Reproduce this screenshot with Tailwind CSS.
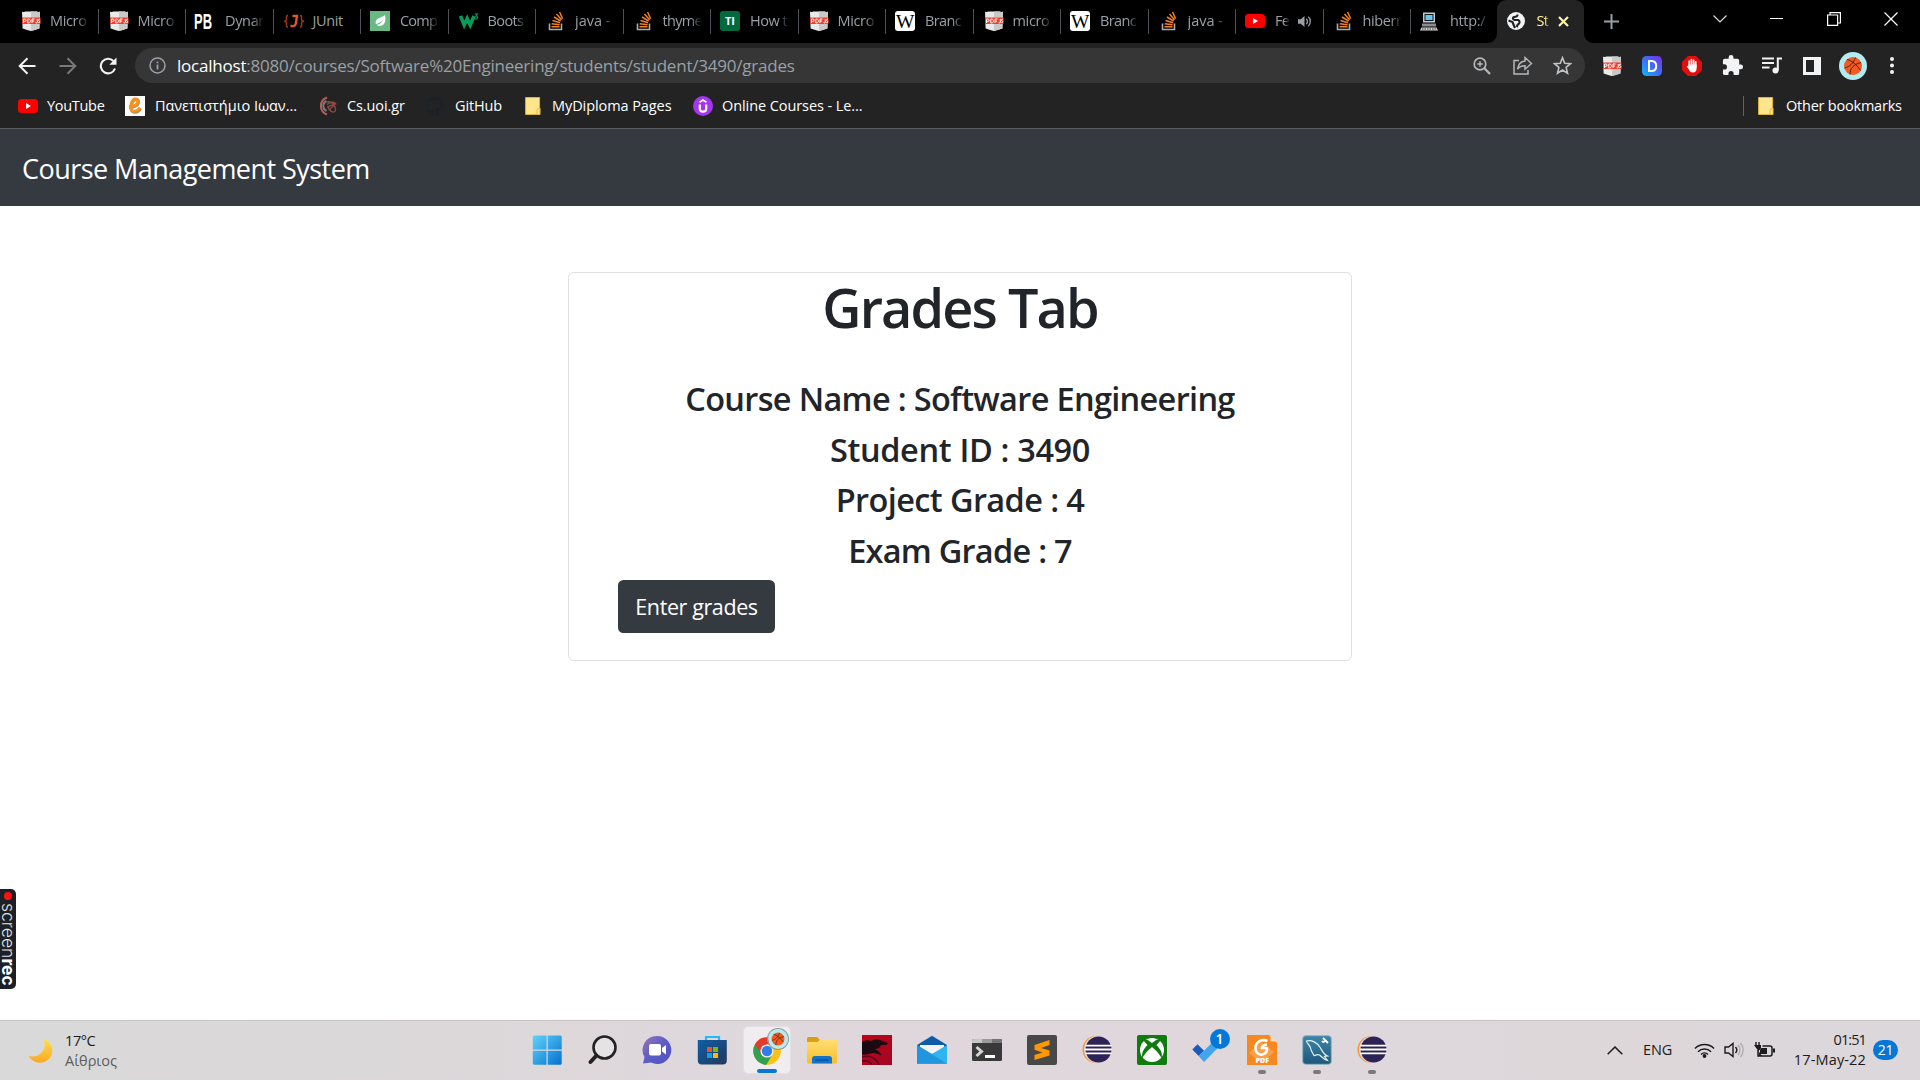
<!DOCTYPE html>
<html lang="en">
<head>
<meta charset="utf-8">
<title>Student Grades</title>
<script src="https://cdn.jsdelivr.net/npm/@tailwindcss/browser@4"></script>
</head>
<body class="relative flex h-screen w-screen flex-col overflow-hidden bg-white font-['Open_Sans','Noto_Sans',sans-serif] text-[#212529]">

<svg class="absolute size-0" aria-hidden="true">
  <defs>
    <linearGradient id="gWin" x1="0" y1="0" x2="1" y2="1"><stop offset="0" stop-color="#5fd3fb"/><stop offset="1" stop-color="#0571d0"/></linearGradient>
    <linearGradient id="gChat" x1="0" y1="0" x2="1" y2="1"><stop offset="0" stop-color="#9a74b4"/><stop offset=".5" stop-color="#5b5cc8"/><stop offset="1" stop-color="#5252bd"/></linearGradient>
    <linearGradient id="gStore" x1="0" y1="0" x2="1" y2="1"><stop offset="0" stop-color="#0d5ea8"/><stop offset="1" stop-color="#253858"/></linearGradient>
    <linearGradient id="gFold" x1="0" y1="0" x2="0" y2="1"><stop offset="0" stop-color="#ffdf75"/><stop offset="1" stop-color="#fbbd26"/></linearGradient>
    <linearGradient id="gMoon" x1="0" y1="0" x2="0" y2="1"><stop offset="0" stop-color="#ffe04a"/><stop offset="1" stop-color="#f9a825"/></linearGradient>
    <linearGradient id="gD" x1="0" y1="1" x2="1" y2="0"><stop offset="0" stop-color="#12b5f5"/><stop offset=".5" stop-color="#3f6df5"/><stop offset="1" stop-color="#7a2be8"/></linearGradient>
    <linearGradient id="gSql" x1="0" y1="0" x2="0" y2="1"><stop offset="0" stop-color="#3c87ab"/><stop offset="1" stop-color="#1f5678"/></linearGradient>
    <linearGradient id="gRed" x1="0" y1="0" x2="1" y2="1"><stop offset="0" stop-color="#c00313"/><stop offset="1" stop-color="#a00826"/></linearGradient>
  </defs>
  <symbol id="pdf" viewBox="0 0 20 20"><path d="M1 0.5c1 .8 2 .8 3 0h12c1 .8 2 .8 3 0l-.6 17L13 19.3 10 20l-3-.7-5.400-1.800z" fill="#e9e9e9"/><path d="M10 .5h6c1 .8 2 .8 3 0l-.6 17L10 20z" fill="#c9c9c9"/><path d="M1 6.500h18.500v6.500H1z" fill="#f0402c"/><path d="M2.500 12V8h1.400a1.200 1.200 0 0 1 0 2.400H2.500M6.800 8v4h.7c2.600 0 2.600-4 0-4zM11 12V8h2.500M11 10h2M16.300 8v3.200c0 1-1.300 1-1.700.3M19 8.200c-2-.6-2 1.600-.8 1.800s.8 2-.9 1.600" fill="none" stroke="#fff"/></symbol>
  <symbol id="junit" viewBox="0 0 20 20"><path d="M8.500 5H13L11.800 12.500C11.500 15 9 15.800 6.500 14.500" fill="none" stroke="#e4572e" stroke-width="2.300"/><path d="M4 4.500c-2 0-1.500 2-1.500 3.500S1.500 10 .8 10.200c.7.200 1.700.6 1.700 2.200S2 16 4 16M16 4.500c2 0 1.500 2 1.500 3.500s1 2 1.700 2.200c-.7.200-1.700.6-1.700 2.200s.5 3.600-1.500 3.600" fill="none" stroke="#a5341f" stroke-width="1.500"/></symbol>
  <symbol id="leaf" viewBox="0 0 20 20"><path d="M0 0h20v20H0z" fill="#68b984"/><path d="M15 4c1 5 .5 10.500-5 11-1.500.1-2.600-.3-3.300-1 3-.8 5-2.500 6.300-5C10.800 11 8.500 12.500 5.800 13 4.500 7 10.500 7.500 15 4zM4.500 15.500l1.500-1" fill="#fff"/></symbol>
  <symbol id="w3" viewBox="0 0 20 20"><path d="M1.500 5l3.700 9 3-6.500 3 6.500 3.800-9" fill="none" stroke="#0a9a5b" stroke-width="3.600"/><path d="M15.500 3h3l-1.500 2c2 0 2 3-.3 3-.8 0-1.200-.3-1.500-.6" fill="none" stroke="#0a9a5b" stroke-width="1.200"/></symbol>
  <symbol id="so" viewBox="0 0 20 20"><path d="M3.500 12.500V18.500H15.500V12.500" fill="none" stroke="#a9adb0" stroke-width="1.600"/><path d="M5.500 15.800h8M5.700 12.800l7.900.9M6.500 9.500l7.500 2.300M8 6l6.600 4M10.500 3l5 5.800M13.600 1l3 6.800" stroke="#f48024" stroke-width="1.500"/></symbol>
  <symbol id="yt" viewBox="0 0 20 20"><rect y="3" width="20" height="14" rx="3.500" fill="#f00"/><path d="M8 7l5 3-5 3z" fill="#fff"/></symbol>
  <symbol id="pc" viewBox="0 0 20 20"><path d="M4 1.500h12v10H4z" fill="#c5c9cc"/><path d="M5.500 3h9v7h-9z" fill="#10191f"/><path d="M6.500 4h7v5h-7z" fill="#69c4ee"/><path d="M3 12.500h14v3H3z" fill="#888e92"/><path d="M2.500 16.500h15l1.500 3H1z" fill="#d5d5d5"/><path d="M3 18h14" stroke="#333" stroke-dasharray="1.500 1"/></symbol>
  <symbol id="globe" viewBox="0 0 20 20"><circle cx="10" cy="10" r="9" fill="#f1f3f4"/><path d="M11.500 3.500c0 2-1 2.300-3.500 2.500-1.500.5-1.500 2.500.5 3h3.500c2 .5 2 3.500.2 4.200-1 .6-.6 1.800-1.700 2.800M2.500 9.500l4 1.500.8 2 1.700 4" fill="none" stroke="#222" stroke-width="2.200"/></symbol>
  <symbol id="folder" viewBox="0 0 16 20"><path d="M.6 1.500h14v17H.6z" fill="#ffe68c" stroke="#d9b43c"/><path d="M12 18.500v-5l3-1.500v6.500z" fill="#ffe68c" stroke="#e3b93a"/></symbol>
  <symbol id="ball" viewBox="0 0 28 28"><circle cx="14" cy="14" r="14" fill="#b2ebf2"/><circle cx="14" cy="14" r="9" fill="#f4591f"/><path d="M8 7.500c5 1 10 5.500 13.500 11M5.500 16c5-1 9-5 11-10.500M11 22.500c0-6 3-10 11-12" fill="none" stroke="#4c2415" stroke-width="1"/></symbol>
  <symbol id="eclipse" viewBox="0 0 30 30"><circle cx="14" cy="14.500" r="13.500" fill="#f7942a"/><circle cx="15.500" cy="14.500" r="13.600" fill="#e2d8de"/><circle cx="16.500" cy="14.500" r="13" fill="#2c2255"/><path d="M3.500 10.700h26M3 14.500h27M3.500 18.300h26" stroke="#fff" stroke-width="1.800"/></symbol>
</svg>

<!-- Tab strip -->
<div class="flex h-[43px] shrink-0 bg-black pl-[11px] text-[14.500px] leading-[20px] tracking-[-0.35px] text-[#9aa0a6]">
  <div class="relative flex w-[87.500px] shrink-0 items-center pb-[1px] pl-[10px]"><svg class="size-5 shrink-0"><use href="#pdf"/></svg><span class="ml-[9px] w-[39px] whitespace-nowrap mask-r-from-70%">Micro</span><i class="absolute right-0 top-[9px] h-[25px] w-px bg-[#4d5156]"></i></div>
  <div class="relative flex w-[87.500px] shrink-0 items-center pb-[1px] pl-[10px]"><svg class="size-5 shrink-0"><use href="#pdf"/></svg><span class="ml-[9px] w-[39px] whitespace-nowrap mask-r-from-70%">Micro</span><i class="absolute right-0 top-[9px] h-[25px] w-px bg-[#4d5156]"></i></div>
  <div class="relative flex w-[87.500px] shrink-0 items-center pb-[1px] pl-[7px]"><svg class="size-5 shrink-0" viewBox="0 0 20 20"><text x="1" y="17.500" font-size="22" font-weight="700" fill="#fff" textLength="18" lengthAdjust="spacingAndGlyphs" font-family="Liberation Sans" letter-spacing="0">PB</text></svg><span class="ml-[12px] w-[39px] whitespace-nowrap mask-r-from-70%">Dynar</span><i class="absolute right-0 top-[9px] h-[25px] w-px bg-[#4d5156]"></i></div>
  <div class="relative flex w-[87.500px] shrink-0 items-center pb-[1px] pl-[10px]"><svg class="size-5 shrink-0"><use href="#junit"/></svg><span class="ml-[9px] w-[39px] whitespace-nowrap">JUnit</span><i class="absolute right-0 top-[9px] h-[25px] w-px bg-[#4d5156]"></i></div>
  <div class="relative flex w-[87.500px] shrink-0 items-center pb-[1px] pl-[9px]"><svg class="size-5 shrink-0"><use href="#leaf"/></svg><span class="ml-[10px] w-[39px] whitespace-nowrap tracking-[-0.8px] mask-r-from-70%">Comp</span><i class="absolute right-0 top-[9px] h-[25px] w-px bg-[#4d5156]"></i></div>
  <div class="relative flex w-[87.500px] shrink-0 items-center pb-[1px] pl-[10px]"><svg class="size-5 shrink-0"><use href="#w3"/></svg><span class="ml-[9px] w-[39px] whitespace-nowrap tracking-[-0.6px] mask-r-from-70%">Boots</span><i class="absolute right-0 top-[9px] h-[25px] w-px bg-[#4d5156]"></i></div>
  <div class="relative flex w-[87.500px] shrink-0 items-center pb-[1px] pl-[10px]"><svg class="size-5 shrink-0"><use href="#so"/></svg><span class="ml-[9px] w-[39px] whitespace-nowrap tracking-normal mask-r-from-70%">java -</span><i class="absolute right-0 top-[9px] h-[25px] w-px bg-[#4d5156]"></i></div>
  <div class="relative flex w-[87.500px] shrink-0 items-center pb-[1px] pl-[10px]"><svg class="size-5 shrink-0"><use href="#so"/></svg><span class="ml-[9px] w-[39px] whitespace-nowrap tracking-[-0.7px] mask-r-from-70%">thyme</span><i class="absolute right-0 top-[9px] h-[25px] w-px bg-[#4d5156]"></i></div>
  <div class="relative flex w-[87.500px] shrink-0 items-center pb-[1px] pl-[9px]"><svg class="size-5 shrink-0" viewBox="0 0 20 20"><rect width="20" height="20" rx="3" fill="#00693e"/><text x="5" y="14" font-size="11" font-weight="700" fill="#fff" font-family="Open Sans" letter-spacing="0">TI</text></svg><span class="ml-[10px] w-[39px] whitespace-nowrap tracking-[-0.5px] mask-r-from-70%">How t</span><i class="absolute right-0 top-[9px] h-[25px] w-px bg-[#4d5156]"></i></div>
  <div class="relative flex w-[87.500px] shrink-0 items-center pb-[1px] pl-[10px]"><svg class="size-5 shrink-0"><use href="#pdf"/></svg><span class="ml-[9px] w-[39px] whitespace-nowrap mask-r-from-70%">Micro</span><i class="absolute right-0 top-[9px] h-[25px] w-px bg-[#4d5156]"></i></div>
  <div class="relative flex w-[87.500px] shrink-0 items-center pb-[1px] pl-[9px]"><svg class="size-5 shrink-0" viewBox="0 0 20 20"><rect width="20" height="20" rx="3" fill="#fff"/><text x="1" y="16.500" font-size="18.500" fill="#000" textLength="18" lengthAdjust="spacingAndGlyphs" font-family="Liberation Serif">W</text></svg><span class="ml-[10px] w-[39px] whitespace-nowrap tracking-[-0.6px] mask-r-from-70%">Branc</span><i class="absolute right-0 top-[9px] h-[25px] w-px bg-[#4d5156]"></i></div>
  <div class="relative flex w-[87.500px] shrink-0 items-center pb-[1px] pl-[10px]"><svg class="size-5 shrink-0"><use href="#pdf"/></svg><span class="ml-[9px] w-[39px] whitespace-nowrap mask-r-from-70%">micro</span><i class="absolute right-0 top-[9px] h-[25px] w-px bg-[#4d5156]"></i></div>
  <div class="relative flex w-[87.500px] shrink-0 items-center pb-[1px] pl-[9px]"><svg class="size-5 shrink-0" viewBox="0 0 20 20"><rect width="20" height="20" rx="3" fill="#fff"/><text x="1" y="16.500" font-size="18.500" fill="#000" textLength="18" lengthAdjust="spacingAndGlyphs" font-family="Liberation Serif">W</text></svg><span class="ml-[10px] w-[39px] whitespace-nowrap tracking-[-0.6px] mask-r-from-70%">Branc</span><i class="absolute right-0 top-[9px] h-[25px] w-px bg-[#4d5156]"></i></div>
  <div class="relative flex w-[87.500px] shrink-0 items-center pb-[1px] pl-[10px]"><svg class="size-5 shrink-0"><use href="#so"/></svg><span class="ml-[9px] w-[39px] whitespace-nowrap tracking-normal mask-r-from-70%">java -</span><i class="absolute right-0 top-[9px] h-[25px] w-px bg-[#4d5156]"></i></div>
  <div class="relative flex w-[87.500px] shrink-0 items-center pb-[1px] pl-[9px]"><svg class="size-5 shrink-0"><use href="#yt"/></svg><span class="ml-[10px] w-[15px] whitespace-nowrap tracking-[-0.8px] mask-r-from-60%">Fe</span>
    <svg class="ml-[8px] size-[13px]" viewBox="0 0 14 14"><path d="M0 4.500h3L7 1v12L3 9.500H0z" fill="#9aa0a6"/><path d="M9 4c1.500 1.500 1.500 4.500 0 6M11 2c3 2.500 3 7.500 0 10" fill="none" stroke="#9aa0a6" stroke-width="1.400"/></svg><i class="absolute right-0 top-[9px] h-[25px] w-px bg-[#4d5156]"></i></div>
  <div class="relative flex w-[87.500px] shrink-0 items-center pb-[1px] pl-[10px]"><svg class="size-5 shrink-0"><use href="#so"/></svg><span class="ml-[9px] w-[39px] whitespace-nowrap tracking-[-0.4px] mask-r-from-70%">hibern</span><i class="absolute right-0 top-[9px] h-[25px] w-px bg-[#4d5156]"></i></div>
  <div class="relative flex w-[85.500px] shrink-0 items-center pb-[1px] pl-[8px]"><svg class="size-5 shrink-0"><use href="#pc"/></svg><span class="ml-[11px] w-[39px] whitespace-nowrap mask-r-from-70%">http:/</span></div>
  <div class="relative flex w-[87.500px] shrink-0 items-center rounded-t-[9px] bg-[#232323] pb-[1px] pl-[9px] text-[#fff59d]">
    <svg class="absolute bottom-0 -left-[9px] h-[9px] w-[9px]" viewBox="0 0 9 9"><path d="M9 0v9H0A9 9 0 0 0 9 0z" fill="#232323"/></svg>
    <svg class="absolute -right-[9px] bottom-0 h-[9px] w-[9px]" viewBox="0 0 9 9"><path d="M0 0v9h9A9 9 0 0 1 0 0z" fill="#232323"/></svg>
    <svg class="size-5 shrink-0"><use href="#globe"/></svg><span class="ml-[11px] w-[13px] whitespace-nowrap tracking-[-0.6px] mask-r-from-60%">St</span>
    <svg class="ml-[8px] size-[11px]" viewBox="0 0 11 11"><path d="M1 1l9 9M10 1l-9 9" stroke="#fff59d" stroke-width="2.200"/></svg></div>
  <div class="flex flex-1 items-center pl-[20px]"><svg class="size-[15px]" viewBox="0 0 15 15"><path d="M7.500 0v15M0 7.500h15" stroke="#9aa0a6" stroke-width="2"/></svg></div>
  <div class="mr-[1px] flex h-[37px] items-center text-white">
    <div class="flex w-[57px] justify-center"><svg class="h-2 w-[14px]" viewBox="0 0 14 8"><path d="M.5.5L7 7l6.500-6.500" fill="none" stroke="#ddd" stroke-width="1.200"/></svg></div>
    <div class="flex w-[57px] justify-center"><i class="h-px w-[13px] bg-white"></i></div>
    <div class="flex w-[57px] justify-center"><svg class="size-[14px]" viewBox="0 0 14 14"><path d="M.6 3h10v10.400H.6zM3 3V.6h10.400V11H10.600" fill="none" stroke="#fff" stroke-width="1.200"/></svg></div>
    <div class="flex w-[57px] justify-center"><svg class="size-[14px]" viewBox="0 0 14 14"><path d="M.5.5l13 13M13.500.5l-13 13" stroke="#fff" stroke-width="1.200"/></svg></div>
  </div>
</div>

<!-- Toolbar -->
<div class="flex h-[45px] shrink-0 items-center bg-[#232323] pl-[18px]">
  <svg class="h-[18px] w-[18px]" viewBox="0 0 18 18"><path d="M17.500 9H2M9.500 1.300L1.700 9l7.800 7.700" fill="none" stroke="#f1f3f4" stroke-width="2"/></svg>
  <svg class="ml-[23px] h-[18px] w-[18px]" viewBox="0 0 18 18"><path d="M.5 9H16M8.500 1.300L16.300 9l-7.800 7.700" fill="none" stroke="#77797b" stroke-width="2"/></svg>
  <svg class="ml-[22px] h-[18px] w-[18px]" viewBox="0 0 18 18"><path d="M16 11.500A7.300 7.300 0 1 1 14.400 4" fill="none" stroke="#f1f3f4" stroke-width="2.100"/><path d="M17.500.5v7.200h-7.200z" fill="#f1f3f4"/></svg>
  <div class="ml-[18px] flex h-[35px] w-[1450px] items-center rounded-full bg-[#363636] pl-[14px] text-[#9aa0a6]">
    <svg class="size-[17px]" viewBox="0 0 17 17"><circle cx="8.500" cy="8.500" r="7.500" fill="none" stroke="#9aa0a6" stroke-width="1.500"/><path d="M8.500 7.400v5M8.500 4.400v1.800" stroke="#9aa0a6" stroke-width="1.800"/></svg>
    <span class="ml-[11px] flex-1 whitespace-nowrap text-[17px] leading-[24px] tracking-[-0.22px]"><span class="text-white">localhost</span>:8080/courses/Software%20Engineering/students/student/3490/grades</span>
    <svg class="size-[18px]" viewBox="0 0 18 18"><circle cx="7" cy="7" r="5.800" fill="none" stroke="#b5b8bb" stroke-width="1.700"/><path d="M11.300 11.300L17 17" stroke="#b5b8bb" stroke-width="2.300"/><path d="M7 4.200v5.600M4.200 7h5.600" stroke="#b5b8bb" stroke-width="1.500"/></svg>
    <svg class="ml-[22px] h-[19px] w-[20px]" viewBox="0 0 20 19"><path d="M6 4.500H1V18h14v-4" fill="none" stroke="#b5b8bb" stroke-width="1.500"/><path d="M12 5V1.500l6.500 6L12 13.300V9.800c-3.500 0-5.800 1-7.500 3.400C5.200 8.500 7.500 5.500 12 5z" fill="none" stroke="#b5b8bb" stroke-width="1.400"/></svg>
    <svg class="mr-[13px] ml-[20px] size-[19px]" viewBox="0 0 19 19"><path d="M9.500 1.700l2.200 5.500 5.900.4-4.500 3.800 1.400 5.800-5-3.200-5 3.200 1.400-5.800L1.400 7.600l5.900-.4z" fill="none" stroke="#c0c3c6" stroke-width="1.600"/></svg>
  </div>
  <div class="ml-[7px] flex items-center">
    <div class="flex w-10 justify-center"><svg class="size-5"><use href="#pdf"/></svg></div>
    <div class="flex w-10 justify-center"><svg class="size-5" viewBox="0 0 20 20"><rect width="20" height="20" rx="4.500" fill="url(#gD)"/><path d="M7 5v10h2.500c3 0 4.700-2 4.700-5s-1.700-5-4.700-5z" fill="none" stroke="#fff" stroke-width="2"/></svg></div>
    <div class="flex w-10 justify-center"><svg class="size-5" viewBox="0 0 20 20"><path d="M6 0h8l6 6v8l-6 6H6l-6-6V6z" fill="#e40d0d"/><path d="M7.200 10V5.200M9.400 9V3.500M11.600 9V4M13.700 11V5.800" stroke="#fff" stroke-width="1.700" stroke-linecap="round"/><path d="M6.400 8.500h8.200v4c0 2.500-1.500 4-3.600 4-2.500 0-3.500-1.500-4.300-3.200L4.700 10.500c.8-.8 1.500-.2 1.700.5z" fill="#fff"/></svg></div>
    <div class="flex w-10 justify-center"><svg class="size-[23px]" viewBox="0 0 24 24"><path d="M20.500 11H19V7a2 2 0 0 0-2-2h-4V3.500a2.500 2.500 0 0 0-5 0V5H4a2 2 0 0 0-2 2v3.800h1.500a2.700 2.700 0 0 1 0 5.400H2V20a2 2 0 0 0 2 2h3.800v-1.500a2.700 2.700 0 0 1 5.400 0V22H17a2 2 0 0 0 2-2v-4h1.500a2.500 2.500 0 0 0 0-5z" fill="#f1f3f4"/></svg></div>
    <div class="flex w-10 justify-center"><svg class="h-[17px] w-[20px]" viewBox="0 0 20 17"><path d="M0 1.500h12M0 6h12M0 10.500h7.500" stroke="#f1f3f4" stroke-width="1.900"/><path d="M15.800 13.500V1.500H20" fill="none" stroke="#f1f3f4" stroke-width="2"/><circle cx="13.500" cy="13.500" r="3" fill="#f1f3f4"/></svg></div>
    <div class="flex w-10 justify-center"><svg class="size-[18px]" viewBox="0 0 18 18"><path d="M0 0h18v18H0zM3 3v12h8V3z" fill="#f1f3f4" fill-rule="evenodd"/></svg></div>
    <div class="flex w-[41px] justify-center"><svg class="size-7"><use href="#ball"/></svg></div>
    <div class="flex w-[38px] justify-center"><svg class="h-[17px] w-1" viewBox="0 0 4 17"><circle cx="2" cy="2" r="2" fill="#f1f3f4"/><circle cx="2" cy="8.500" r="2" fill="#f1f3f4"/><circle cx="2" cy="15" r="2" fill="#f1f3f4"/></svg></div>
  </div>
</div>

<!-- Bookmarks bar -->
<div class="flex h-[41px] shrink-0 items-center border-b border-[#5a5c5e] bg-[#232323] pb-1 pl-[18px] text-[14.500px] leading-[20px] tracking-[-0.3px] whitespace-nowrap text-white">
  <svg class="size-5"><use href="#yt"/></svg><span class="ml-[9px] w-[78px]">YouTube</span>
  <svg class="size-5" viewBox="0 0 20 20"><path d="M0 0h20v20H0z" fill="#fff"/><path d="M4.500 11.300c6 .5 9.500-3 8.800-6.300-.6-2.500-4.600-2.200-6.300 2.200-1.700 5-.8 9 2.800 9 2.500 0 4.200-1.200 5.800-3.500" fill="none" stroke="#a98a66" stroke-width="3.200"/><path d="M4 10.500c6 .5 9.500-3 8.800-6-.6-2.500-4.600-2.200-6.300 2.200-1.700 5-.8 8.500 2.800 8.500 2.500 0 4.200-1.200 5.800-3.500" fill="none" stroke="#f7941d" stroke-width="2.900"/></svg><span class="ml-[10px] w-[163px] tracking-[-0.05px]">Πανεπιστήμιο Ιωαν...</span>
  <svg class="-ml-px mr-px size-5" viewBox="0 0 20 20"><path d="M10 1.500a9 9 0 0 0 0 17" fill="none" stroke="#b96054" stroke-width="2"/><path d="M9.500 5a5.500 5.500 0 0 0 0 10" fill="none" stroke="#777" stroke-width="2"/><path d="M10 6c3-1 7 1.500 8.500 5.500M10 8.500c3-3 8-3 9 0M11 12c2-4 7-4 7.500 1s-6 3.500-8-3M12 14.500l6-7" fill="none" stroke="#8c4a42" stroke-width="1.300"/></svg><span class="ml-[9px] w-[78px] tracking-[-0.1px]">Cs.uoi.gr</span>
  <svg class="size-5" viewBox="0 0 20 20"><path d="M7.500 19v-3.500c-3 .5-3.500-1.500-4.500-2M12.500 19v-3.500c0-1-.3-1.500-.8-2 3-.4 4.800-1.600 4.800-5 0-1.500-.6-2.500-1.300-3.200.2-.8.200-1.800-.2-2.500-1 0-2 .5-2.700 1a9 9 0 0 0-4.600 0C7 3.300 6 2.800 5 2.800c-.4.800-.4 1.700-.2 2.500" fill="none" stroke="#1a2026" stroke-width="2"/><circle cx="10" cy="10" r="9" fill="none" stroke="#1b2229"/></svg><span class="ml-[10px] w-[70px] tracking-[-0.15px]">GitHub</span>
  <svg class="h-5 w-4"><use href="#folder"/></svg><span class="ml-[11px] w-[141px] tracking-[-0.08px]">MyDiploma Pages</span>
  <svg class="size-5" viewBox="0 0 20 20"><circle cx="10" cy="10" r="10" fill="#a435f0"/><path d="M6.800 8.500v4.200c0 4 6.400 4 6.400 0V8.500" fill="none" stroke="#fff" stroke-width="2.200"/><path d="M6.500 6.300L10 4l3.500 2.300" fill="none" stroke="#fff" stroke-width="1.700"/></svg><span class="ml-[9px] flex-1 tracking-[-0.08px]">Online Courses - Le...</span>
  <i class="h-5 w-px bg-[#5f6368]"></i>
  <svg class="ml-[14px] h-5 w-4"><use href="#folder"/></svg><span class="ml-[12px] w-[134px] tracking-[-0.22px]">Other bookmarks</span>
</div>

<!-- Page -->
<nav class="flex h-[77px] shrink-0 items-center bg-[#343a40] pt-[2px] pl-[22px]"><a class="text-[27px] leading-[40px] tracking-[-0.55px] whitespace-nowrap text-white">Course Management System</a></nav>
<main class="flex flex-1 flex-col items-center pt-[66px]">
  <section class="flex h-[389px] w-[784px] flex-col rounded-[5.500px] border border-[#dfdfdf] bg-white px-[49px]">
    <h1 class="mb-[38px] text-center text-[54px] leading-[68px] font-semibold tracking-[-1.900px]">Grades Tab</h1>
    <h4 class="mb-[11px] text-center text-[32.500px] leading-[39.700px] font-semibold tracking-[-0.680px] whitespace-nowrap">Course Name : Software Engineering</h4>
    <h4 class="mb-[11px] text-center text-[32.500px] leading-[39.700px] font-semibold tracking-[-0.350px]">Student ID : 3490</h4>
    <h4 class="mb-[11px] text-center text-[32.500px] leading-[39.700px] font-semibold tracking-[-0.600px]">Project Grade : 4</h4>
    <h4 class="mb-[9px] text-center text-[32.500px] leading-[39.700px] font-semibold tracking-[-0.750px]">Exam Grade : 7</h4>
    <button class="h-[53px] w-[157px] rounded-[5.500px] bg-[#343a40] pt-px text-[21.500px] tracking-[-0.4px] whitespace-nowrap text-white">Enter grades</button>
  </section>
</main>

<!-- Recorder handle docked over the page -->
<div class="absolute top-[889px] left-0 flex h-[100px] w-4 flex-col items-center rounded-r-[5px] bg-[#1d2127] pt-[3px] pr-px">
  <i class="size-2 rounded-full bg-[#ff1111]"></i>
  <span class="mt-[3px] font-['Inter',sans-serif] text-[17.500px] leading-[16px] font-light whitespace-nowrap text-[#dfe1e3] [writing-mode:vertical-rl]">screen<b class="font-bold text-white">rec</b></span>
</div>

<!-- Taskbar -->
<footer class="flex h-[60px] shrink-0 items-center border-t border-[#c5c3c5] bg-linear-to-r from-[#d9d9d9] via-[#e0d7dc] to-[#dcd7da] pb-px text-[15px] leading-[20px] text-[#1b1b1b]">
  <div class="flex w-[519.500px] items-center pl-[28px]">
    <svg class="size-[25px]" viewBox="0 0 25 25"><path d="M15.500 0.500C26 5 27 17 19 22.500 12 27 4 24 0.500 18 11 20.500 20 12 15.500.5z" fill="url(#gMoon)"/></svg>
    <div class="ml-[12px] flex flex-col pt-px text-[14.500px]"><span class="tracking-[-0.4px]">17°C</span><span class="text-[#5c5c5c]">Αίθριος</span></div>
  </div>
  <div class="flex h-full items-center">
    <div class="flex w-[55px] justify-center"><svg class="size-[30px]" viewBox="0 0 30 30"><path d="M2 .5h12.500v14H.8V1.700zM15.700.5h13l1 1v13h-14zM.8 15.700h13.700v14H2l-1.200-1zM15.700 15.700h14v13l-1 1h-13z" fill="url(#gWin)"/></svg></div>
    <div class="flex w-[55px] justify-center"><svg class="size-[30px]" viewBox="0 0 30 30"><circle cx="17.500" cy="12.500" r="11" fill="#e6e3e5" stroke="#222" stroke-width="2.600"/><path d="M9.500 20.500L3.500 27" stroke="#222" stroke-width="4" stroke-linecap="round"/></svg></div>
    <div class="flex w-[55px] justify-center"><svg class="size-[30px]" viewBox="0 0 30 30"><path d="M15 1a14 14 0 1 1-6 26.500L1 28.500 2.500 22A14 14 0 0 1 15 1z" fill="url(#gChat)"/><rect x="7" y="9" width="12" height="11.500" rx="2" fill="#fff"/><path d="M20 13l4-3v9.500l-4-3z" fill="#fff"/></svg></div>
    <div class="flex w-[55px] justify-center"><svg class="size-[30px]" viewBox="0 0 30 30"><path d="M9 6V2h13v4" fill="none" stroke="#28b8f3" stroke-width="2.200"/><path d="M.8 5h29v20.500q0 4-4 4h-21q-4 0-4-4z" fill="url(#gStore)"/><path d="M10 12h5v5h-5z" fill="#f25022"/><path d="M16 12h5v5h-5z" fill="#7fba00"/><path d="M10 18h5v5h-5z" fill="#00a4ef"/><path d="M16 18h5v5h-5z" fill="#ffb900"/></svg></div>
    <div class="flex w-[55px] justify-center">
      <div class="relative flex size-12 items-center justify-center rounded-[5px] border border-[#e3dfe2] bg-[#efedef]">
        <svg class="mt-px mr-[1px] size-[28px]" viewBox="0 0 28 28"><circle cx="14" cy="14" r="13.800" fill="#fbc116"/><path d="M14 14L2 7.200a13.800 13.800 0 0 0 11.500 20.600l6-10.500z" fill="#33a050"/><path d="M2 7.200A13.800 13.800 0 0 1 26 7.200H14L8.500 17.500z" fill="#e33b2e"/><circle cx="14" cy="14" r="6.600" fill="#f5f5f5"/><circle cx="14" cy="14" r="5.200" fill="#2f7de9"/></svg>
        <svg class="absolute top-[2px] right-[2px] size-5 rounded-full ring-1 ring-[#8b9a9c]"><use href="#ball"/></svg>
        <i class="absolute bottom-0 left-[13px] h-1 w-5 rounded-full bg-[#0a77d5]"></i>
      </div>
    </div>
    <div class="flex w-[55px] justify-center"><svg class="size-[30px]" viewBox="0 0 30 30"><path d="M0 10V3.500Q0 2 1.500 2H10l3 3v5z" fill="#dc9f10"/><path d="M0 7h10.500l3-2.500H30V27q0 1.500-1.500 1.500h-27Q0 28.500 0 27z" fill="url(#gFold)"/><path d="M5 28.500V24q0-3 3-3h14q3 0 3 3v4.500z" fill="#1273c8"/><path d="M8.500 25h13" stroke="#0b4b90" stroke-width="1.300"/></svg></div>
    <div class="flex w-[55px] justify-center"><svg class="size-[30px]" viewBox="0 0 30 30"><path d="M0 0h30v30H0z" fill="url(#gRed)"/><path d="M0 7c3-2 6-2 9-1 3-2 6-2 9-1l8 3-1 1.500-6 .8-2 2.700-4 1.500c3 .8 5.500 3.500 6.500 6-4-2-8-3.500-11-2-3 1-6 1.500-8.500 1z" fill="#1b0a12"/><path d="M0 22c6-2 14 0 17 8M0 26c5-1 9 1 10 4" fill="none" stroke="#5e0520" stroke-width="1.500"/></svg></div>
    <div class="flex w-[55px] justify-center"><svg class="size-[30px]" viewBox="0 0 30 30"><path d="M0 10L15 .8 30 10v6H0z" fill="#0f5ca8"/><path d="M3 10h24v8H3z" fill="#f3f3f3"/><path d="M0 10l15 9 15-9v18.700H0z" fill="#2eb4ee"/><path d="M0 10l30 18.700H0z" fill="#2195dd"/></svg></div>
    <div class="flex w-[55px] justify-center"><svg class="size-[30px]" viewBox="0 0 30 30"><rect y="4" width="30" height="22" rx="1.500" fill="#393939"/><path d="M0 8V5.500Q0 4 1.500 4H10v4z" fill="#c6c6c6"/><path d="M10 4h10v4H10z" fill="#9b9b9b"/><path d="M20 4h8.500Q30 4 30 5.500V8H20z" fill="#737373"/><path d="M4.500 12l5 4.500-5 4.500" fill="none" stroke="#d5d5d5" stroke-width="3"/><path d="M13 21.500h10" stroke="#fff" stroke-width="3"/></svg></div>
    <div class="flex w-[55px] justify-center"><svg class="size-[30px]" viewBox="0 0 30 30"><rect width="30" height="30" rx="2" fill="#484848"/><path d="M22.500 5v5L14 13l8.500 2.500v5L7.500 25v-5l8-2.500-8-2.700V10z" fill="#ff9800"/></svg></div>
    <div class="flex w-[55px] justify-center"><svg class="size-[30px]"><use href="#eclipse"/></svg></div>
    <div class="flex w-[55px] justify-center"><svg class="size-[30px]" viewBox="0 0 30 30"><rect width="30" height="30" rx="2" fill="#107c10"/><circle cx="15" cy="15" r="12" fill="#fff"/><path d="M6 5c3-1.500 6 .5 9 3 3-2.500 6-4.500 9-3l-4.500 5c4 4 6.500 9 5 13.500C23 19 18.500 15 15 12c-3.500 3-8 7-9.500 11.500-1.500-4.500 1-9.500 5-13.500z" fill="#107c10"/></svg></div>
    <div class="relative flex w-[55px] justify-center"><svg class="size-[30px]" viewBox="0 0 30 30"><path d="M.3 14.500L5.500 9.300l6.500 6.400-5.300 5.300z" fill="#185abd"/><path d="M6.700 21L20.500 7.200l7 4L12 27z" fill="#41a5ee"/></svg><span class="absolute -top-[6px] right-[5px] flex size-5 items-center justify-center rounded-full bg-[#0578d7] text-[14px] font-semibold text-white">1</span></div>
    <div class="relative flex w-[55px] justify-center"><svg class="size-[30px]" viewBox="0 0 30 30"><path d="M0 0h22l8 8v22H0z" fill="#f6881f"/><path d="M2 18L14 7l13 10-12 11z" fill="#f9a04b"/><path d="M23.500 0L30 6.500h-6.500z" fill="#ffd9b0"/><path d="M20.500 6c-6-2.500-12 1-12 7 0 5 4 7.500 7.500 6.300 3-1 4.500-3.300 4-6.300h-5c.5-2.500 2-3.500 5-3.500" fill="none" stroke="#fff" stroke-width="2.600"/><text x="8.500" y="27.500" font-size="6.500" font-weight="800" fill="#fff" textLength="13.500" lengthAdjust="spacingAndGlyphs" font-family="Open Sans">PDF</text></svg><i class="absolute -bottom-[9px] h-1 w-2 rounded-full bg-[#7d787b]"></i></div>
    <div class="relative flex w-[55px] justify-center"><svg class="size-[30px]" viewBox="0 0 30 30"><rect x=".7" y=".7" width="28.600" height="28.600" rx="3" fill="url(#gSql)" stroke="#8fb4c6"/><path d="M4.500 6c5-1.500 11 1.500 14 7 2 3.500 3 6.500 7 8l-3 .5 3 4c-4-1-6-4-8-5.500-3-1.500-4 1-5.500.5-1-2-3-4.500-3.500-7.500S5 9 4.500 6z" fill="none" stroke="#e6f0f5" stroke-width="1.200"/><path d="M21 3l5 5m-6-2c1 1.500 3 1 3-1" stroke="#fff" stroke-width="1.800" fill="none"/></svg><i class="absolute -bottom-[9px] h-1 w-2 rounded-full bg-[#7d787b]"></i></div>
    <div class="relative flex w-[55px] justify-center"><svg class="size-[30px]"><use href="#eclipse"/></svg><i class="absolute -bottom-[9px] h-1 w-2 rounded-full bg-[#7d787b]"></i></div>
  </div>
  <div class="flex flex-1 items-center justify-end pr-[22px]">
    <svg class="h-[9px] w-[16px]" viewBox="0 0 16 9"><path d="M.7 8.300L8 1l7.300 7.300" fill="none" stroke="#1b1b1b" stroke-width="1.500"/></svg>
    <span class="ml-[20px] w-[31px] text-[14.500px] tracking-[-0.1px]">ENG</span>
    <svg class="ml-[20px] h-[16px] w-[21px]" viewBox="0 0 21 16"><path d="M1 6.500a13.500 13.500 0 0 1 19 0M4 9.700a9.300 9.300 0 0 1 13 0M7 12.500a5 5 0 0 1 7 0" fill="none" stroke="#1b1b1b" stroke-width="1.500"/><circle cx="10.500" cy="14" r="1.900" fill="#1b1b1b"/></svg>
    <svg class="ml-[9px] h-[16px] w-[20px]" viewBox="0 0 20 16"><path d="M1 5h3.500L9 1.500v13L4.500 11H1z" fill="none" stroke="#1b1b1b" stroke-width="1.400"/><path d="M11.500 5c1.500 1.700 1.500 4.300 0 6" fill="none" stroke="#1b1b1b" stroke-width="1.400"/><path d="M14 3c2.500 2.500 2.500 7.500 0 10M16.500 1c3.500 4 3.500 10 0 14" fill="none" stroke="#a9a4a7" stroke-width="1.200"/></svg>
    <svg class="ml-[10px] h-[16px] w-[21px]" viewBox="0 0 21 16"><path d="M0 3h7v3q0 2-2.200 2.300V14H8" fill="#1b1b1b"/><path d="M2 0v4M5 0v4" stroke="#1b1b1b" stroke-width="1.400"/><path d="M8.500 4H16q2 0 2 2v6q0 2-2 2H4V8" fill="none" stroke="#1b1b1b" stroke-width="1.500"/><path d="M7.500 6H13v6H6V8zM19 6.500h2v4h-2z" fill="#1b1b1b"/></svg>
    <div class="ml-[18px] flex w-[73px] flex-col items-end pb-px text-[14.500px] whitespace-nowrap"><span class="tracking-[-0.9px]">01:51</span><span class="tracking-[0.15px]">17-May-22</span></div>
    <span class="ml-[7px] flex h-5 w-[25px] items-center justify-center rounded-full bg-[#0578d7] text-[14px] tracking-[-0.3px] text-white">21</span>
  </div>
</footer>
</body>
</html>
